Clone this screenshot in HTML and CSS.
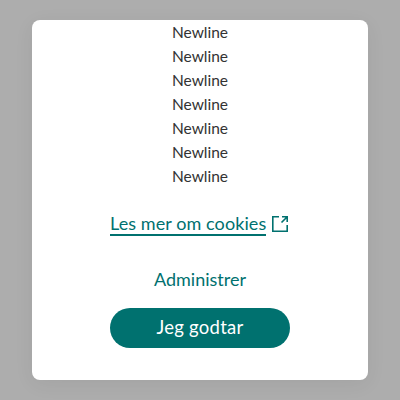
FILE: index.html
```html
<!DOCTYPE html>
<html lang="no">
<head>
<meta charset="utf-8">
<title>Cookies</title>
<link rel="stylesheet" href="styles.css">
</head>
<body>
<main class="dialog">
<div class="lines">
<p>Newline</p><p>Newline</p><p>Newline</p><p>Newline</p><p>Newline</p><p>Newline</p><p>Newline</p>
</div>
<a class="link" href="#"><span class="label">Les mer om cookies</span><svg class="icon" viewBox="0 0 16 16"><path d="M7 .8H.8v14.400h14.400V9M10 .8h5.200V6M15 1L9.500 6.500"/></svg></a>
<button class="manage">Administrer</button>
<button class="accept">Jeg godtar</button>
</main>
</body>
</html>
```
FILE: styles.css
```css
* { box-sizing: border-box; }
body { margin: 0; height: 400px; padding: 20px 32px; background: #adadad; font-family: Lato, sans-serif; overflow: hidden; }
.dialog { height: 360px; background: #fff; border-radius: 8px; display: flex; flex-direction: column; align-items: center; box-shadow: 0 4px 20px rgba(0,0,0,.06); }
.lines { color: #333; font-size: 15.5px; line-height: 24px; text-align: center; }
.lines p { margin: 0; }
.link { display: flex; gap: 6px; width: 180px; margin-top: 24px; color: #00716f; text-decoration: none; font-size: 18px; line-height: 22px; }
.label { width: 156px; height: 24px; border-bottom: 2px solid; white-space: nowrap; letter-spacing: .08px; }
.icon { width: 16px; height: 16px; margin-top: 4px; fill: none; stroke: currentColor; stroke-width: 1.6; }
button { border: 0; padding: 0 0 2px; font: 18px/24px Lato, sans-serif; }
.manage { margin-top: 24px; height: 40px; color: #00716f; background: none; }
.accept { margin-top: 8px; width: 180px; height: 40px; border-radius: 20px; background: #00716f; color: #fff; font-size: 18.500px; letter-spacing: .25px; }
```
